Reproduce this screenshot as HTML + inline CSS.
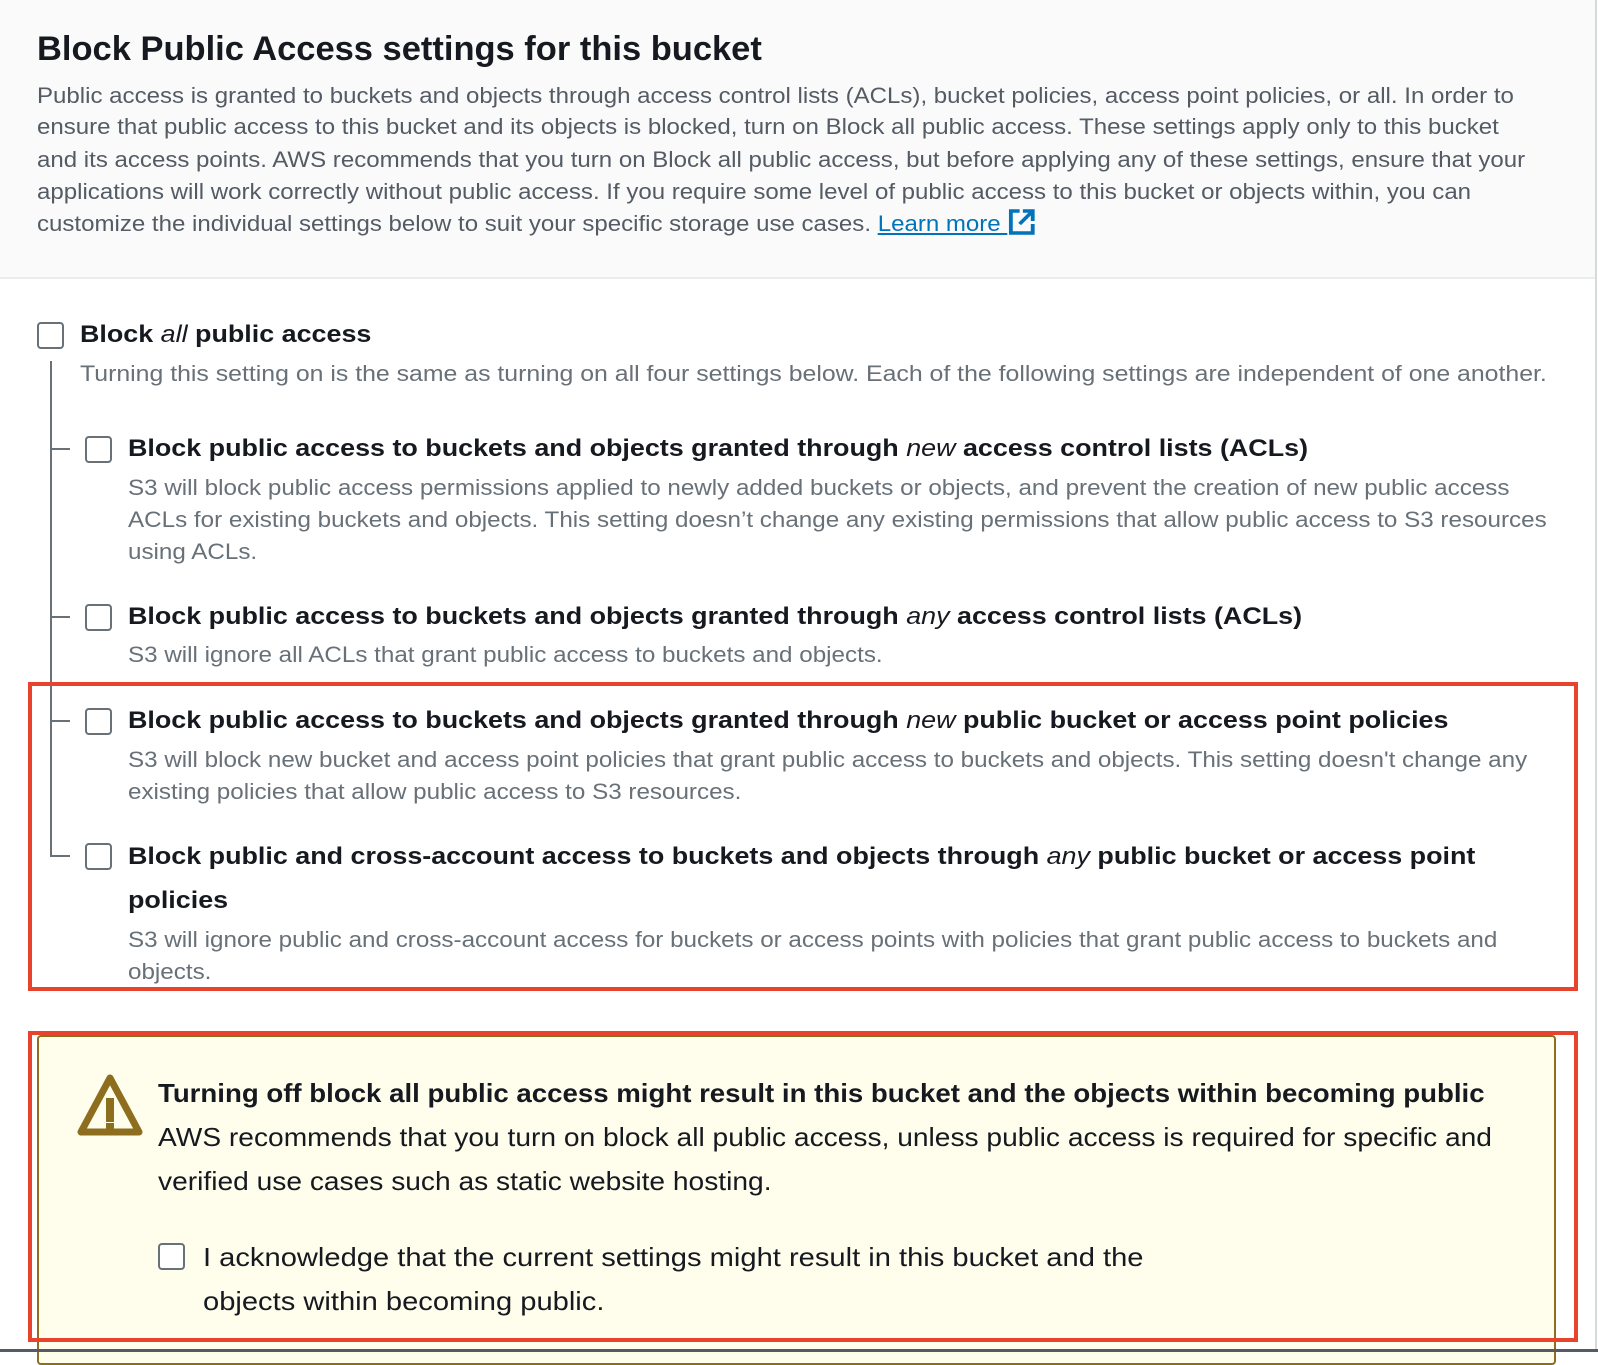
<!DOCTYPE html>
<html><head><meta charset="utf-8"><style>
*{margin:0;padding:0;box-sizing:border-box}
body{width:1598px;height:1352px;position:relative;overflow:hidden;background:#fff;font-family:"Liberation Sans",sans-serif}
.l{position:absolute;white-space:nowrap;line-height:32px;height:32px;transform-origin:0 50%}
.h{font-size:34px;font-weight:bold;color:#16191f;line-height:40px;height:40px;transform:scaleX(1.014)}
.p{font-size:22px;color:#545b64;transform:scaleX(1.093)}
.t{font-size:24px;font-weight:bold;color:#16191f;transform:scaleX(1.12)}
.d{font-size:22px;color:#687078;transform:scaleX(1.10)}
.d0{transform:scaleX(1.129)}
.w{font-size:26px;color:#16191f;transform:scaleX(1.083)}
.wb{font-weight:bold;transform:scaleX(1.062)}
.ack{transform:scaleX(1.12)}
.cb{position:absolute;width:27px;height:27px;border:2px solid #687078;border-radius:4px;background:#fff}
a{color:#0073bb;text-decoration:underline}
</style></head><body>
<div style="position:absolute;left:0;top:0;width:1596px;height:279px;background:#fafafa;border-bottom:2px solid #eaeded"></div>
<div style="position:absolute;left:1595px;top:0;width:2px;height:1352px;background:#d5dbdb"></div>
<div class="l h" style="left:37px;top:29px">Block Public Access settings for this bucket</div>
<div class="l p" style="left:37px;top:80px">Public access is granted to buckets and objects through access control lists (ACLs), bucket policies, access point policies, or all. In order to</div>
<div class="l p" style="left:37px;top:111px">ensure that public access to this bucket and its objects is blocked, turn on Block all public access. These settings apply only to this bucket</div>
<div class="l p" style="left:37px;top:144px">and its access points. AWS recommends that you turn on Block all public access, but before applying any of these settings, ensure that your</div>
<div class="l p" style="left:37px;top:176px">applications will work correctly without public access. If you require some level of public access to this bucket or objects within, you can</div>
<div class="l p" style="left:37px;top:208px">customize the individual settings below to suit your specific storage use cases. <a>Learn more </a><svg width="26" height="28" viewBox="0 0 26 28" style="vertical-align:-5px"><path d="M11 3H3v22h20v-9" fill="none" stroke="#0073bb" stroke-width="3.5"/><path d="M14 3h9v10M23 3L11 16" fill="none" stroke="#0073bb" stroke-width="3.5"/></svg></div>

<div style="position:absolute;left:50px;top:361px;width:2px;height:496px;background:#687078"></div>
<div style="position:absolute;left:50px;top:448px;width:20px;height:2px;background:#687078"></div>
<div style="position:absolute;left:50px;top:616px;width:20px;height:2px;background:#687078"></div>
<div style="position:absolute;left:50px;top:720px;width:20px;height:2px;background:#687078"></div>
<div style="position:absolute;left:50px;top:855px;width:20px;height:2px;background:#687078"></div>

<div class="cb" style="left:37px;top:322px"></div>
<div class="l t" style="left:80px;top:319px">Block <i style="font-weight:normal">all</i> public access</div>
<div class="l d d0" style="left:80px;top:358px">Turning this setting on is the same as turning on all four settings below. Each of the following settings are independent of one another.</div>

<div class="cb" style="left:85px;top:436px"></div>
<div class="l t" style="left:128px;top:433px">Block public access to buckets and objects granted through <i style="font-weight:normal">new</i> access control lists (ACLs)</div>
<div class="l d" style="left:128px;top:472px">S3 will block public access permissions applied to newly added buckets or objects, and prevent the creation of new public access</div>
<div class="l d" style="left:128px;top:504px">ACLs for existing buckets and objects. This setting doesn’t change any existing permissions that allow public access to S3 resources</div>
<div class="l d" style="left:128px;top:536px">using ACLs.</div>

<div class="cb" style="left:85px;top:604px"></div>
<div class="l t" style="left:128px;top:601px">Block public access to buckets and objects granted through <i style="font-weight:normal">any</i> access control lists (ACLs)</div>
<div class="l d" style="left:128px;top:639px">S3 will ignore all ACLs that grant public access to buckets and objects.</div>

<div style="position:absolute;left:28px;top:682px;width:1550px;height:309px;border:4px solid #e8442d"></div>
<div class="cb" style="left:85px;top:708px"></div>
<div class="l t" style="left:128px;top:705px">Block public access to buckets and objects granted through <i style="font-weight:normal">new</i> public bucket or access point policies</div>
<div class="l d" style="left:128px;top:744px">S3 will block new bucket and access point policies that grant public access to buckets and objects. This setting doesn't change any</div>
<div class="l d" style="left:128px;top:776px">existing policies that allow public access to S3 resources.</div>

<div class="cb" style="left:85px;top:843px"></div>
<div class="l t" style="left:128px;top:841px">Block public and cross-account access to buckets and objects through <i style="font-weight:normal">any</i> public bucket or access point</div>
<div class="l t" style="left:128px;top:885px">policies</div>
<div class="l d" style="left:128px;top:924px">S3 will ignore public and cross-account access for buckets or access points with policies that grant public access to buckets and</div>
<div class="l d" style="left:128px;top:956px">objects.</div>

<div style="position:absolute;left:37px;top:1035px;width:1519px;height:330px;background:#fffdec;border:2px solid #8d6e1f;border-radius:4px"></div>
<div style="position:absolute;left:28px;top:1031px;width:1550px;height:311px;border:4px solid #e8442d"></div>
<svg style="position:absolute;left:76px;top:1073px" width="68" height="66" viewBox="0 0 68 66"><path d="M34 5L5 59h58z" fill="none" stroke="#8d6e1f" stroke-width="7" stroke-linejoin="round"/><rect x="30" y="25" width="8" height="24" fill="#8d6e1f"/><rect x="30" y="50" width="8" height="7" fill="#8d6e1f"/></svg>
<div class="l w wb" style="left:158px;top:1077px">Turning off block all public access might result in this bucket and the objects within becoming public</div>
<div class="l w" style="left:158px;top:1121px">AWS recommends that you turn on block all public access, unless public access is required for specific and</div>
<div class="l w" style="left:158px;top:1165px">verified use cases such as static website hosting.</div>
<div class="cb" style="left:158px;top:1243px"></div>
<div class="l w ack" style="left:203px;top:1241px">I acknowledge that the current settings might result in this bucket and the</div>
<div class="l w ack" style="left:203px;top:1285px">objects within becoming public.</div>
<div style="position:absolute;left:0;top:1349px;width:1598px;height:3px;background:#545b64"></div>
</body></html>
